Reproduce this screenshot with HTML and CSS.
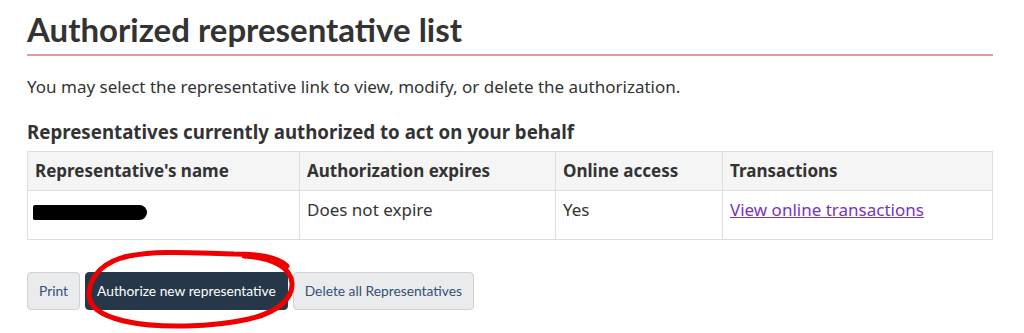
FILE: index.html
```html
<!DOCTYPE html>
<html lang="en">
<head>
  <meta charset="UTF-8">
  <meta name="viewport" content="width=device-width, initial-scale=1.0">
  <title>Authorized representative list</title>
  <link rel="stylesheet" href="styles.css">
</head>
<body>
  <main class="container">
    <h1>Authorized representative list</h1>

    <p class="intro">You may select the representative link to view, modify, or delete the authorization.</p>

    <h2>Representatives currently authorized to act on your behalf</h2>
    <table class="reps">
      <thead>
        <tr>
          <th class="col-name">Representative's name</th>
          <th class="col-expires">Authorization expires</th>
          <th class="col-access">Online access</th>
          <th>Transactions</th>
        </tr>
      </thead>
      <tbody>
        <tr>
          <td><span class="redacted"></span></td>
          <td>Does not expire</td>
          <td>Yes</td>
          <td><a href="#" class="visited">View online transactions</a></td>
        </tr>
      </tbody>
    </table>

    <div class="actions">
      <button class="btn">Print</button>
      <span class="highlight">
        <button class="btn btn-primary">Authorize new representative</button>
        <!-- hand-drawn marker around the button -->
        <svg class="circle" width="240" height="90" viewBox="70 240 240 90">
          <path d="M288 266 C280 258 262 254 235 254 C195 253 160 250 130 256 C105 261 92 275 90 292 C89 306 100 315 125 321 C160 329 215 327 250 319 C280 312 294 298 293 283 C292 268 275 258 245 256" />
        </svg>
      </span>
      <button class="btn">Delete all Representatives</button>
    </div>
  </main>
</body>
</html>
```

FILE: styles.css
```css
body {
  margin: 0;
  font-family: "Noto Sans", "Open Sans", sans-serif;
  color: #333;
  background: #fff;
}
.container {
  width: 966px;
  padding: 0 0 23px 27px;
}
h1 {
  font-family: Lato, sans-serif;
  font-weight: 700;
  font-size: 33px;
  line-height: 1.1;
  margin: 0;
  padding: 11px 0 7px;
  border-bottom: 2px solid #e29ca1;
  color: #333;
}
.intro {
  font-size: 17px;
  margin: 18px 0 0;
  line-height: 26px;
}
h2 {
  font-size: 18.7px;
  font-weight: 700;
  margin: 20px 0 0;
  line-height: 24px;
}
.reps {
  width: 100%;
  border-collapse: collapse;
  margin-top: 7px;
  font-size: 17px;
}
.reps th,
.reps td {
  border: 1px solid #ddd;
  text-align: left;
  vertical-align: top;
  padding: 8px 7px;
  line-height: 22px;
}
.reps th {
  background-color: #f5f5f5;
  font-weight: 700;
}
.reps td {
  height: 32px;
}
.col-name { width: 257px; }
.col-expires { width: 241px; }
.col-access { width: 152px; }
.visited {
  color: #7834bc;
}
.redacted {
  display: inline-block;
  width: 114px;
  height: 15px;
  margin: 6px 0 0 -2px;
  background: #000;
  border-radius: 2px 8px 8px 2px;
}
.actions {
  display: flex;
  align-items: center;
  gap: 5px;
  margin-top: 32px;
}
.btn {
  font-family: Lato, sans-serif;
  font-size: 13.8px;
  padding: 10px 11px;
  border: 1px solid #cfd1d5;
  border-radius: 4px;
  background: #eaebed;
  color: #335075;
  line-height: 16px;
  cursor: pointer;
}
.btn-primary {
  background: #26374a;
  border-color: #26374a;
  color: #fff;
}
.highlight {
  position: relative;
  display: flex;
}
.circle {
  position: absolute;
  left: -16px;
  top: -32px;
  overflow: visible;
  pointer-events: none;
}
.circle path {
  fill: none;
  stroke: #ee0000;
  stroke-width: 5;
  stroke-linecap: round;
}
```
